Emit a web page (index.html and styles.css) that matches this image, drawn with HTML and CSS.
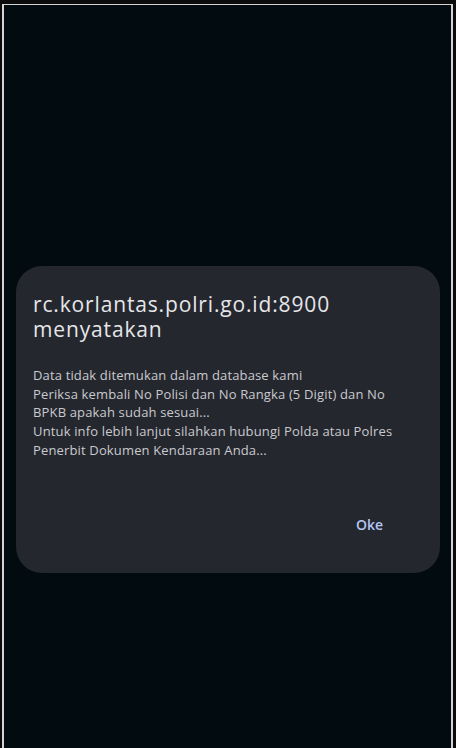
FILE: index.html
```html
<!DOCTYPE html>
<html lang="id">
<head>
<meta charset="utf-8">
<title>rc.korlantas.polri.go.id:8900</title>
<link rel="stylesheet" href="styles.css">
</head>
<body>
<div class="screen">
  <div class="dialog" role="alertdialog">
    <h1 class="title">rc.korlantas.polri.go.id:8900<br>menyatakan</h1>
    <p class="message">Data tidak ditemukan dalam database kami<br>Periksa kembali No Polisi dan No Rangka (5 Digit) dan No BPKB apakah sudah sesuai...<br>Untuk info lebih lanjut silahkan hubungi Polda atau Polres Penerbit Dokumen Kendaraan Anda...</p>
    <div class="actions">
      <button class="btn">Oke</button>
    </div>
  </div>
</div>
</body>
</html>
```
FILE: styles.css
```css
html, body {
  margin: 0;
  padding: 0;
  background: #0b0b0b;
  overflow: hidden;
}
.screen {
  box-sizing: border-box;
  height: 744px;
  margin: 4px 3px 0 2px;
  border: 2px solid #d4d4d4;
  border-top-width: 1px;
  border-bottom: none;
  background: #020b10;
  display: flex;
  flex-direction: column;
  font-family: "Open Sans", Roboto, sans-serif;
  overflow: hidden;
}
.dialog {
  margin: 261px 11px 0 12px;
  background: #25272f;
  border-radius: 26px;
  padding: 26px 17px 38px 17px;
  height: 307px;
  box-sizing: border-box;
  display: flex;
  flex-direction: column;
}
.title {
  margin: 0;
  font-size: 21px;
  line-height: 25px;
  font-weight: 400;
  letter-spacing: 0.85px;
  color: #e6e6e8;
}
.message {
  margin: 24px 0 0 0;
  max-width: 372px;
  font-size: 13px;
  line-height: 18.7px;
  letter-spacing: 0.15px;
  color: #c9cacd;
}
.actions {
  margin-top: auto;
  display: flex;
  justify-content: flex-end;
}
.btn {
  font-family: inherit;
  font-size: 14px;
  font-weight: 600;
  line-height: 20px;
  color: #b3c6f2;
  background: none;
  border: none;
  padding: 0 40px 0 0;
}
```
